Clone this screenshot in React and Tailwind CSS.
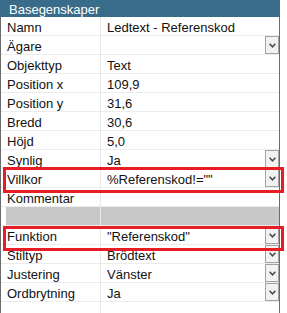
import React from "react";

const rows = [
  { label: "Namn", value: "Ledtext - Referenskod" },
  { label: "Ägare", value: "", dd: true },
  { label: "Objekttyp", value: "Text" },
  { label: "Position x", value: "109,9" },
  { label: "Position y", value: "31,6" },
  { label: "Bredd", value: "30,6" },
  { label: "Höjd", value: "5,0" },
  { label: "Synlig", value: "Ja", dd: true },
  { label: "Villkor", value: '%Referenskod!=""', dd: true },
  { label: "Kommentar", value: "" },
  { label: "", value: "", gray: true },
  { label: "Funktion", value: '"Referenskod"', dd: true },
  { label: "Stiltyp", value: "Brödtext", dd: true },
  { label: "Justering", value: "Vänster", dd: true },
  { label: "Ordbrytning", value: "Ja", dd: true },
  { label: "", value: "" },
];

function Chevron() {
  return (
    <svg width="7" height="5" viewBox="0 0 7 5">
      <path d="M0.6 0.8 L3.5 3.8 L6.4 0.8" fill="none" stroke="#4a4a4a" strokeWidth="1.5" />
    </svg>
  );
}

export default function App() {
  return (
    <div
      className="relative w-[287px] h-[313px] bg-white overflow-hidden text-[13px] text-[#111] leading-none"
      style={{ fontFamily: '"Liberation Sans", Arial, sans-serif' }}
    >
      <div className="w-[280px] flex flex-col">
        <div className="h-[17px] bg-[#396b8a] text-white flex items-center pl-[9px] pt-[1px]">
          Basegenskaper
        </div>
        <div className="border-l border-r border-[#6b6b6b] flex flex-col">
          {rows.map((r, i) => (
            <div key={i} className="flex h-[19px] border-b border-[#ececec]">
              <div
                className={`flex items-center pl-[6px] pt-[2px] border-r border-[#e8e8e8] ${
                  r.gray ? "bg-[#c8c8c8] ml-[5px] w-[95px]" : "w-[100px]"
                }`}
              >
                {r.label}
              </div>
              <div
                className={`flex-1 flex items-center pl-[6px] justify-between ${
                  r.gray ? "bg-[#c8c8c8]" : ""
                }`}
              >
                <span className="pt-[2px]">{r.value}</span>
                {r.dd && (
                  <div className="w-[14px] h-[18px] border border-[#a3a3a3] bg-[#f2f2f2] flex items-center justify-center">
                    <Chevron />
                  </div>
                )}
              </div>
            </div>
          ))}
        </div>
      </div>
      <div className="absolute left-[3px] top-[167px] w-[281px] h-[26px] border-[3px] border-[#e81c24]" />
      <div className="absolute left-[3px] top-[226px] w-[281px] h-[25px] border-[3px] border-[#e81c24]" />
    </div>
  );
}
